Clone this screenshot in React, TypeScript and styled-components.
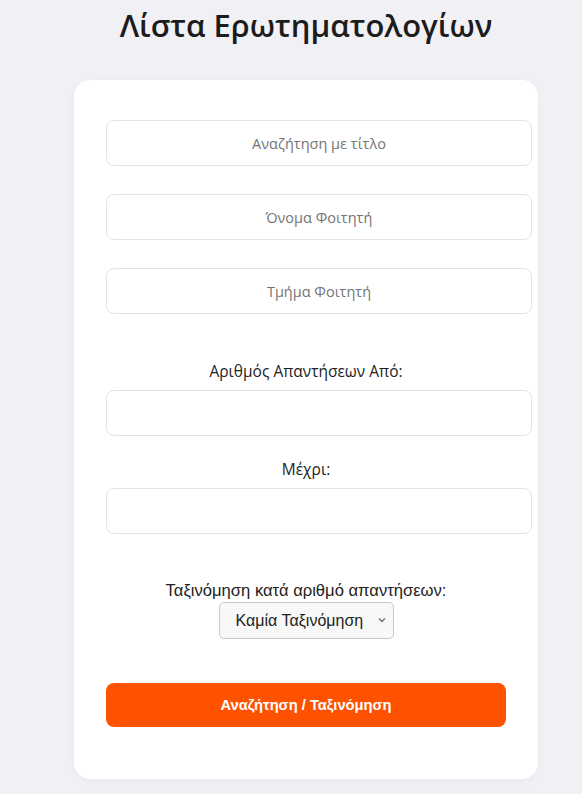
import React from "react";
import styled, { createGlobalStyle } from "styled-components";

const Global = createGlobalStyle`
  html, body { margin: 0; padding: 0; background: #f1f1f5; }
  body { font-family: "Open Sans", "Noto Sans", sans-serif; color: #222; }
`;

const Page = styled.div`
  display: flex;
  flex-direction: column;
  align-items: center;
  padding-left: 30px;
  padding-bottom: 20px;
`;

const Title = styled.h1`
  font-family: "Open Sans", sans-serif;
  font-weight: 600;
  font-size: 31px;
  line-height: 42px;
  margin: 4px 0 34px;
  color: #1c1c1c;
`;

const Card = styled.form`
  background: #fff;
  border-radius: 16px;
  box-shadow: 0 2px 8px rgba(0, 0, 0, 0.04);
  width: 400px;
  padding: 40px 32px 52px;
  display: flex;
  flex-direction: column;
`;

const TextInput = styled.input<{ $gap?: number }>`
  box-sizing: content-box;
  width: 100%;
  height: 20px;
  padding: 12px;
  margin: 0 0 ${(p) => p.$gap ?? 0}px;
  border: 1px solid #e3e3e3;
  border-radius: 8px;
  font-family: "Open Sans", sans-serif;
  font-size: 14.5px;
  text-align: center;
  color: #333;
  background: #fff;
  outline: none;
  &::placeholder { color: #757575; }
`;

const Label = styled.label<{ $top: number }>`
  display: block;
  text-align: center;
  font-family: "Open Sans", sans-serif;
  font-size: 15.5px;
  line-height: 22px;
  color: #222;
  margin: ${(p) => p.$top}px 0 8px;
`;

const SortBlock = styled.div`
  display: flex;
  flex-direction: column;
  align-items: center;
  margin-top: 47px;
`;

const SortLabel = styled.label`
  font-family: "Liberation Sans", Arial, sans-serif;
  font-size: 16.6px;
  line-height: 19px;
  color: #222;
  margin-bottom: 2px;
`;

const SelectWrap = styled.div`
  position: relative;
  display: inline-flex;
`;

const Select = styled.select`
  appearance: none;
  -webkit-appearance: none;
  font-family: "Liberation Sans", Arial, sans-serif;
  font-size: 16px;
  width: 175px;
  height: 37px;
  padding: 0 28px 0 16px;
  border: 1px solid #c8c8c8;
  border-radius: 5px;
  background: #f8f8f8;
  color: #222;
`;

const Chevron = styled.svg`
  position: absolute;
  right: 8px;
  top: 15px;
  width: 8px;
  height: 6px;
  pointer-events: none;
`;

const Button = styled.button`
  margin-top: 44px;
  width: 400px;
  height: 44px;
  border: none;
  border-radius: 8px;
  background: #ff5200;
  color: #fff;
  font-family: "Liberation Sans", Arial, sans-serif;
  font-weight: 700;
  font-size: 14.7px;
  cursor: pointer;
`;

export default function App() {
  return (
    <>
      <Global />
      <Page>
        <Title>Λίστα Ερωτηματολογίων</Title>
        <Card onSubmit={(e) => e.preventDefault()}>
          <TextInput placeholder="Αναζήτηση με τίτλο" $gap={28} />
          <TextInput placeholder="Όνομα Φοιτητή" $gap={28} />
          <TextInput placeholder="Τμήμα Φοιτητή" />
          <Label $top={46}>Αριθμός Απαντήσεων Από:</Label>
          <TextInput type="text" />
          <Label $top={22}>Μέχρι:</Label>
          <TextInput type="text" />
          <SortBlock>
            <SortLabel>Ταξινόμηση κατά αριθμό απαντήσεων:</SortLabel>
            <SelectWrap>
              <Select defaultValue="none">
                <option value="none">Καμία Ταξινόμηση</option>
                <option value="asc">Αύξουσα</option>
                <option value="desc">Φθίνουσα</option>
              </Select>
              <Chevron viewBox="0 0 8 6">
                <path d="M1 1.5 L4 4.5 L7 1.5" fill="none" stroke="#6e6e6e" strokeWidth="1.3" />
              </Chevron>
            </SelectWrap>
          </SortBlock>
          <Button type="submit">Αναζήτηση / Ταξινόμηση</Button>
        </Card>
      </Page>
    </>
  );
}
